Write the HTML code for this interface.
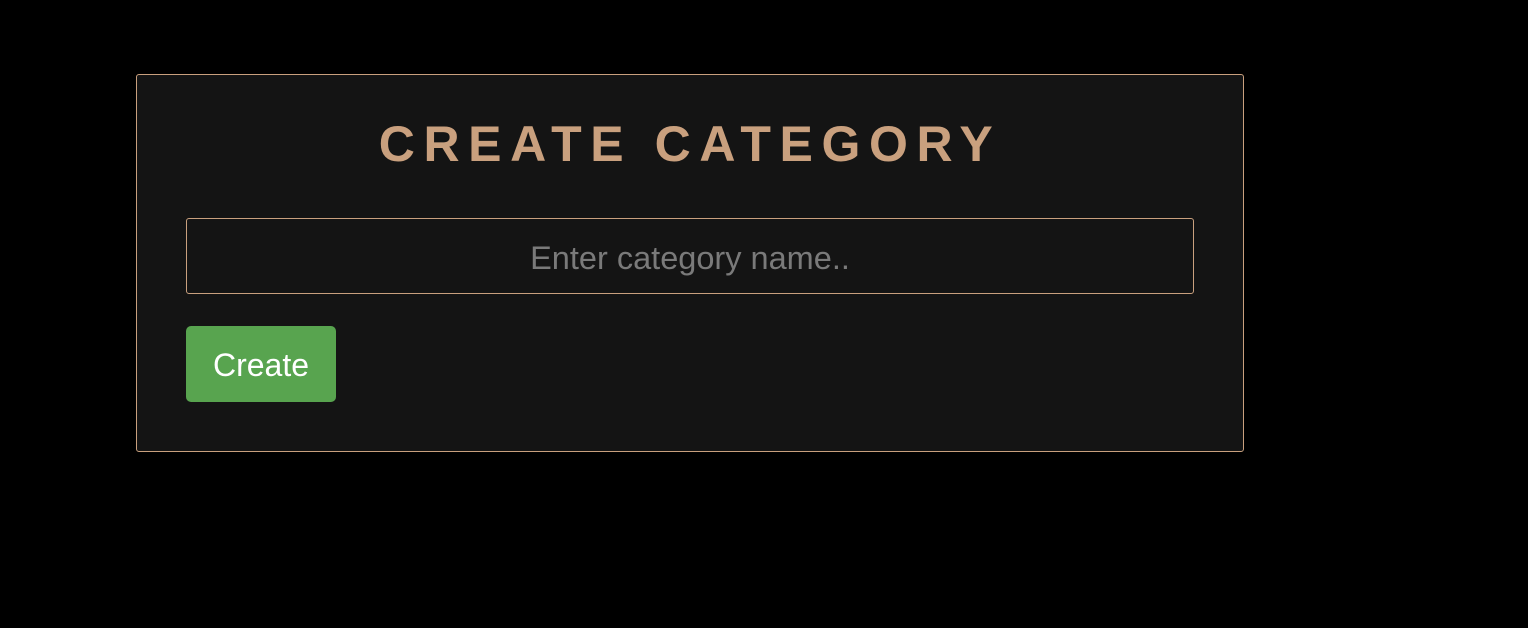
<!DOCTYPE html>
<html><head><style>
html,body{margin:0;padding:0;background:#000;width:1528px;height:628px;overflow:hidden;font-family:"Liberation Sans",sans-serif;}
.card{position:absolute;left:136px;top:74px;width:1106px;height:376px;background:#141414;border:1px solid #c9a07e;border-radius:3px;box-sizing:content-box;}
h1{position:absolute;left:136px;width:1108px;top:116px;margin:0;text-align:center;color:#c9a07e;font-size:50px;font-weight:bold;letter-spacing:8.6px;line-height:56px;}
.inp{position:absolute;left:186px;top:218px;width:1008px;height:76px;border:1px solid #c9a07e;border-radius:3px;box-sizing:border-box;color:#7a7a7a;font-size:32.5px;text-align:center;line-height:78px;}
.btn{position:absolute;left:186px;top:326px;width:150px;height:76px;background:#58a44f;border-radius:5px;color:#fff;font-size:32px;text-align:center;line-height:78px;}
</style></head><body>
<div class="card"></div>
<h1>CREATE CATEGORY</h1>
<div class="inp">Enter category name..</div>
<div class="btn">Create</div>
</body></html>
